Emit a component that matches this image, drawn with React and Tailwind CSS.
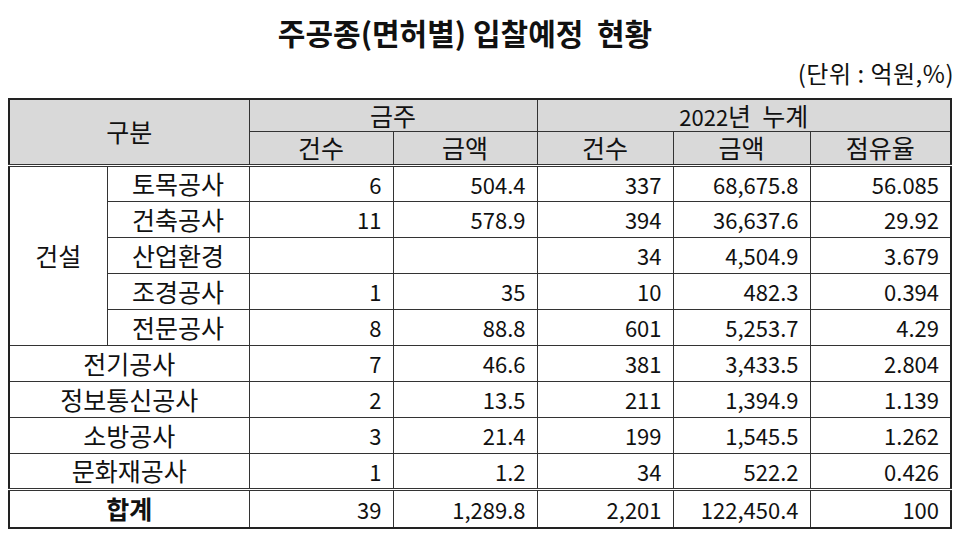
const font = { fontFamily: '"Noto Sans CJK KR", "Noto Sans", sans-serif' };

const rows = [
  { group: '건설', name: '토목공사', a: '6', b: '504.4', c: '337', d: '68,675.8', e: '56.085' },
  { group: '건설', name: '건축공사', a: '11', b: '578.9', c: '394', d: '36,637.6', e: '29.92' },
  { group: '건설', name: '산업환경', a: '', b: '', c: '34', d: '4,504.9', e: '3.679' },
  { group: '건설', name: '조경공사', a: '1', b: '35', c: '10', d: '482.3', e: '0.394' },
  { group: '건설', name: '전문공사', a: '8', b: '88.8', c: '601', d: '5,253.7', e: '4.29' },
  { name: '전기공사', a: '7', b: '46.6', c: '381', d: '3,433.5', e: '2.804' },
  { name: '정보통신공사', a: '2', b: '13.5', c: '211', d: '1,394.9', e: '1.139' },
  { name: '소방공사', a: '3', b: '21.4', c: '199', d: '1,545.5', e: '1.262' },
  { name: '문화재공사', a: '1', b: '1.2', c: '34', d: '522.2', e: '0.426' },
];

const num = 'border border-[#333] text-right pr-[11px] leading-none';
const hd = 'border border-[#333] text-center font-normal leading-none text-[25px]';
const lbl = 'border border-[#333] text-center leading-none text-[25px]';

export default function App() {
  return (
    <div className="w-[960px] h-[538px] bg-white text-[#111] overflow-hidden" style={font}>
      <h1 className="text-center text-[30px] font-bold pt-[12px] leading-[40px] pr-[30px]">
        주공종(면허별) 입찰예정&nbsp; 현황
      </h1>
      <div className="text-right pr-[6px] text-[24px] leading-[30px] mt-[6px] tracking-[0.5px]">(단위 : 억원,%)</div>
      <div className="pl-[8px] mt-[10px]">
        <table className="border-collapse border-2 border-[#222] text-[22px] table-fixed w-[942px]">
          <colgroup>
            <col className="w-[98px]" />
            <col className="w-[142px]" />
            <col className="w-[144px]" />
            <col className="w-[144px]" />
            <col className="w-[136px]" />
            <col className="w-[137px]" />
            <col className="w-[141px]" />
          </colgroup>
          <thead className="bg-[#d9d9d9]">
            <tr className="h-[32px]">
              <th colSpan={2} rowSpan={2} className={`${hd} border-b-[3px] border-double`}>구분</th>
              <th colSpan={2} className={hd}>금주</th>
              <th colSpan={3} className={hd}>
                <span className="text-[22px]">2022</span>년&nbsp; 누계
              </th>
            </tr>
            <tr className="h-[34px]">
              <th className={`${hd} border-b-[3px] border-double`}>건수</th>
              <th className={`${hd} border-b-[3px] border-double`}>금액</th>
              <th className={`${hd} border-b-[3px] border-double`}>건수</th>
              <th className={`${hd} border-b-[3px] border-double`}>금액</th>
              <th className={`${hd} border-b-[3px] border-double`}>점유율</th>
            </tr>
          </thead>
          <tbody>
            {rows.map((r, i) => (
              <tr key={i} className="h-[36px]">
                {i === 0 && (
                  <td rowSpan={5} className={lbl}>건설</td>
                )}
                {r.group ? (
                  <td className={lbl}>{r.name}</td>
                ) : (
                  <td colSpan={2} className={lbl}>{r.name}</td>
                )}
                <td className={num}>{r.a}</td>
                <td className={num}>{r.b}</td>
                <td className={num}>{r.c}</td>
                <td className={num}>{r.d}</td>
                <td className={num}>{r.e}</td>
              </tr>
            ))}
            <tr className="h-[39px]">
              <td colSpan={2} className={`${lbl} border-t-[3px] border-double font-bold`}>합계</td>
              <td className={`${num} border-t-[3px] border-double`}>39</td>
              <td className={`${num} border-t-[3px] border-double`}>1,289.8</td>
              <td className={`${num} border-t-[3px] border-double`}>2,201</td>
              <td className={`${num} border-t-[3px] border-double`}>122,450.4</td>
              <td className={`${num} border-t-[3px] border-double`}>100</td>
            </tr>
          </tbody>
        </table>
      </div>
    </div>
  );
}
